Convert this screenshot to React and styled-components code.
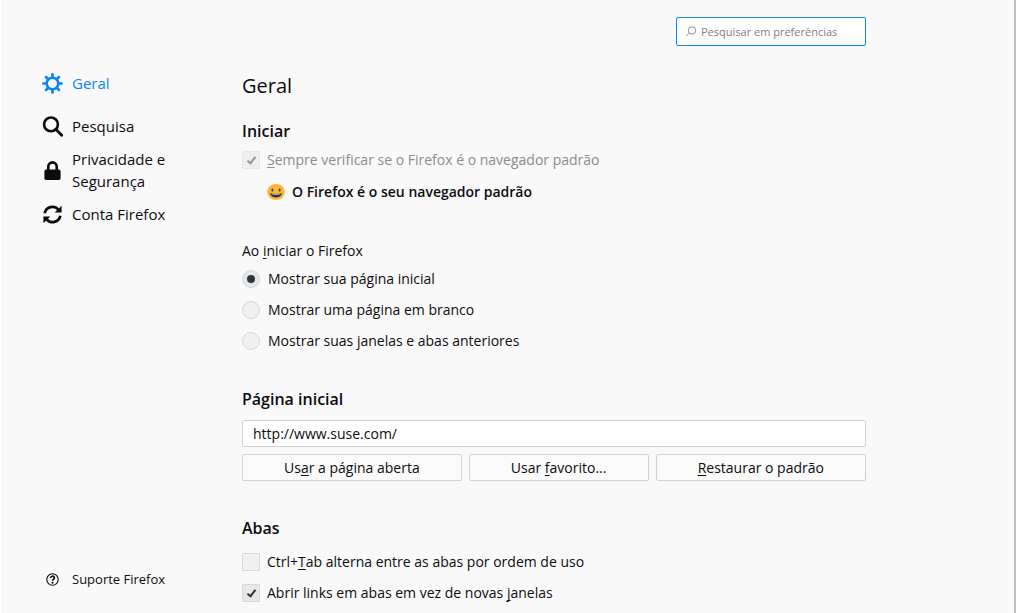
import React, { useState } from "react";
import styled, { createGlobalStyle } from "styled-components";

const GlobalStyle = createGlobalStyle`
  *, *::before, *::after { box-sizing: border-box; }
  body {
    margin: 0;
    background: #f9f9fa;
    color: #0c0c0d;
    font-family: "Open Sans", "Noto Sans", sans-serif;
    font-size: 14px;
    line-height: 22px;
  }
  button, input { font: inherit; color: inherit; }
`;

const Page = styled.div`
  display: flex;
  gap: 42px;
  min-height: 100vh;
  padding-left: 41px;
  border-left: 1px solid #fff;
  border-right: 2px solid #bdbdbe;
`;

const Sidebar = styled.aside`
  display: flex;
  flex: 0 0 158px;
  flex-direction: column;
  justify-content: space-between;
  padding: 67px 0 23px;
`;

const NavList = styled.ul`
  display: flex;
  flex-direction: column;
  gap: 1px;
  margin: 0;
  padding: 0;
  list-style: none;
`;

const NavLink = styled.a`
  display: flex;
  align-items: center;
  gap: 9px;
  padding: ${(p) => (p.$compact ? "0" : "5px 0")};
  margin-bottom: ${(p) => (p.$spaced ? "10px" : "0")};
  color: ${(p) => (p.$active ? "#0a84ff" : "#0c0c0d")};
  font-size: ${(p) => (p.$compact ? "13px" : "15px")};
  text-decoration: none;
`;

const IconBox = styled.span`
  display: flex;
  flex: 0 0 21px;
  justify-content: center;
  svg { display: block; }
`;

const Main = styled.main`
  display: flex;
  flex: 1 1 auto;
  flex-direction: column;
  max-width: 624px;
  padding: 17px 0 9px;
`;

const SearchBox = styled.label`
  display: flex;
  align-items: center;
  align-self: flex-end;
  gap: 4px;
  width: 190px;
  height: 29px;
  padding: 0 8px;
  border: 1px solid #0a84ff;
  border-radius: 2px;
  background: #fff;
  svg { flex: none; }
`;

const SearchInput = styled.input`
  flex: 1;
  min-width: 0;
  padding: 0;
  border: 0;
  outline: 0;
  background: none;
  font-size: 11px;
  line-height: 20px;
  &::placeholder { color: #808080; opacity: 1; }
`;

const Title = styled.h1`
  margin: 26px 0 20px;
  font-size: 20px;
  font-weight: 400;
  line-height: 28px;
`;

const Section = styled.section`
  display: flex;
  flex-direction: column;
  & + & { margin-top: 36px; }
`;

const Heading = styled.h2`
  margin: 0 0 ${(p) => p.$gap || "10px"};
  font-size: 16px;
  font-weight: 600;
  line-height: 22px;
`;

const Options = styled.div`
  display: flex;
  flex-direction: column;
  gap: ${(p) => p.$gap || "9px"};
`;

const RadioGroup = styled.fieldset`
  min-width: 0;
  margin: 37px 0 0;
  padding: 0;
  border: 0;
`;

const Legend = styled.legend`
  margin-bottom: 6px;
  padding: 0;
`;

const Option = styled.label`
  display: flex;
  align-items: center;
  gap: ${(p) => p.$gap || "7px"};
  color: ${(p) => (p.$disabled ? "#8b8c8c" : "inherit")};
`;

const Toggle = styled.input`
  display: grid;
  flex: none;
  place-items: center;
  width: 18px;
  height: 18px;
  margin: 0;
  border: 1px solid #d6d8d9;
  background: #f0f0f1;
  appearance: none;
  &:checked { background: #e6e7e8; }
  &:disabled { border-color: #e6e7e8; background: #efeff0; opacity: 1; }
`;

const CheckInput = styled(Toggle).attrs({ type: "checkbox" })`
  border-radius: 1px;
  &:checked::after {
    content: "";
    width: 5px;
    height: 9px;
    margin-bottom: 2px;
    border: solid #2e3436;
    border-width: 0 2px 2px 0;
    transform: rotate(38deg);
  }
  &:disabled::after { border-color: #929495; }
`;

const RadioInput = styled(Toggle).attrs({ type: "radio" })`
  border-radius: 50%;
  &:checked::after {
    content: "";
    width: 8px;
    height: 8px;
    border-radius: 50%;
    background: #2e3436;
  }
`;

const Status = styled.p`
  display: flex;
  align-items: center;
  gap: 7px;
  margin: 0;
  padding-left: 25px;
  font-weight: 600;
`;

const Key = styled.u`
  text-decoration-thickness: 1px;
  text-underline-offset: 2px;
  text-decoration-skip-ink: none;
`;

const UrlInput = styled.input`
  width: 100%;
  height: 27px;
  padding: 0 10px;
  border: 1px solid #d2d2d4;
  border-radius: 2px;
  outline: 0;
  background: #fff;
`;

const ButtonRow = styled.div`
  display: flex;
  gap: 7px;
  margin-top: 7px;
`;

const Button = styled.button`
  flex: 1 1 auto;
  height: 27px;
  padding: 0 8px;
  border: 1px solid #d2d2d4;
  border-radius: 2px;
  background: #fafafb;
`;

const GearIcon = () => (
  <svg width="21" height="21" viewBox="0 0 21 21" fill="none" stroke="currentColor" aria-hidden="true">
    <circle cx="10.5" cy="10.5" r="5.8" strokeWidth="2.6" />
    {[0, 45, 90, 135, 180, 225, 270, 315].map((a) => (
      <path key={a} d="M10.5 4.5V1.4" strokeWidth="2.7" strokeLinecap="round" transform={`rotate(${a} 10.5 10.5)`} />
    ))}
  </svg>
);

const MagnifierIcon = () => (
  <svg width="21" height="21" viewBox="0 0 21 21" fill="none" stroke="currentColor" aria-hidden="true">
    <circle cx="9" cy="8.4" r="6.9" strokeWidth="2.6" />
    <path d="M13.8 13.3L19.7 19.3" strokeWidth="2.8" strokeLinecap="round" />
  </svg>
);

const LockIcon = () => (
  <svg width="17" height="19" viewBox="0 0 17 19" aria-hidden="true">
    <path d="M4.3 9.5V5.6a4.2 4.2 0 0 1 8.4 0V9.5" fill="none" stroke="currentColor" strokeWidth="2.6" />
    <rect x="0.4" y="8.6" width="16.2" height="10.4" rx="1.8" fill="currentColor" />
  </svg>
);

const SyncIcon = () => (
  <svg width="19" height="19" viewBox="0 0 19 19" fill="none" stroke="currentColor" aria-hidden="true">
    <path d="M1.7 8.2A7.8 7.8 0 0 1 15.4 4.7M17.3 10.8A7.8 7.8 0 0 1 3.6 14.3" strokeWidth="2.7" />
    <path d="M18.6 .7V7.6H11.7ZM.4 18.3V11.4H7.3Z" fill="currentColor" stroke="none" />
  </svg>
);

const HelpIcon = () => (
  <svg width="13" height="13" viewBox="0 0 13 13" fill="none" stroke="currentColor" aria-hidden="true">
    <circle cx="6.5" cy="6.5" r="5.7" strokeWidth="1.1" />
    <path d="M4.6 5a1.9 1.7 0 1 1 2.8 1.4q-.9.5-.9 1.3" strokeWidth="1.7" />
    <circle cx="6.5" cy="9.7" r="1" fill="currentColor" stroke="none" />
  </svg>
);

const SearchIcon = () => (
  <svg width="12" height="12" viewBox="0 0 12 12" fill="none" stroke="#8c8c8c" aria-hidden="true">
    <circle cx="7" cy="4.4" r="3.7" />
    <path d="M4.3 7.1L1.4 9.9" strokeLinecap="round" />
  </svg>
);

const SmileIcon = () => (
  <svg width="18" height="18" viewBox="0 0 18 18" aria-hidden="true">
    <ellipse cx="9" cy="9" rx="8.8" ry="8.1" fill="#ffb636" />
    <ellipse cx="5.4" cy="7" rx="1" ry="1.6" fill="#2b3b47" />
    <ellipse cx="12.6" cy="7" rx="1" ry="1.6" fill="#2b3b47" />
    <path d="M2.8 10.2Q9 11.6 15.2 10.2Q13.8 14.4 9 14.4T2.8 10.2Z" fill="#2b3b47" />
    <path d="M4.6 10.7Q9 11.6 13.4 10.7L13 11.3Q9 12 5 11.3Z" fill="#fff" />
  </svg>
);

export default function App() {
  const [startup, setStartup] = useState("home");
  const [cycleTabs, setCycleTabs] = useState(false);
  const [openInTabs, setOpenInTabs] = useState(true);

  const startupOptions = [
    ["home", "Mostrar sua página inicial"],
    ["blank", "Mostrar uma página em branco"],
    ["previous", "Mostrar suas janelas e abas anteriores"],
  ];

  return (
    <>
      <GlobalStyle />
      <Page>
        <Sidebar>
          <nav>
            <NavList>
              <li><NavLink href="#geral" $active $spaced aria-current="page"><IconBox><GearIcon /></IconBox>Geral</NavLink></li>
              <li><NavLink href="#pesquisa"><IconBox><MagnifierIcon /></IconBox>Pesquisa</NavLink></li>
              <li><NavLink href="#privacidade"><IconBox><LockIcon /></IconBox>Privacidade e Segurança</NavLink></li>
              <li><NavLink href="#conta"><IconBox><SyncIcon /></IconBox>Conta Firefox</NavLink></li>
            </NavList>
          </nav>
          <NavLink href="#suporte" $compact><IconBox><HelpIcon /></IconBox>Suporte Firefox</NavLink>
        </Sidebar>
        <Main>
          <SearchBox>
            <SearchIcon />
            <SearchInput type="text" placeholder="Pesquisar em preferências" aria-label="Pesquisar em preferências" />
          </SearchBox>
          <Title>Geral</Title>
          <Section>
            <Heading $gap="7px">Iniciar</Heading>
            <Options $gap="10px">
              <Option $disabled>
                <CheckInput defaultChecked disabled />
                <span><Key>S</Key>empre verificar se o Firefox é o navegador padrão</span>
              </Option>
              <Status><SmileIcon />O Firefox é o seu navegador padrão</Status>
            </Options>
            <RadioGroup>
              <Legend>Ao <Key>i</Key>niciar o Firefox</Legend>
              <Options>
                {startupOptions.map(([value, text]) => (
                  <Option key={value} $gap="8px">
                    <RadioInput name="startup" value={value} checked={startup === value} onChange={() => setStartup(value)} />
                    <span>{text}</span>
                  </Option>
                ))}
              </Options>
            </RadioGroup>
          </Section>
          <Section>
            <Heading id="home-heading">Página inicial</Heading>
            <UrlInput type="text" defaultValue="http://www.suse.com/" aria-labelledby="home-heading" />
            <ButtonRow>
              <Button type="button">Us<Key>a</Key>r a página aberta</Button>
              <Button type="button">Usar <Key>f</Key>avorito...</Button>
              <Button type="button"><Key>R</Key>estaurar o padrão</Button>
            </ButtonRow>
          </Section>
          <Section>
            <Heading $gap="12px">Abas</Heading>
            <Options>
              <Option>
                <CheckInput checked={cycleTabs} onChange={(e) => setCycleTabs(e.target.checked)} />
                <span>Ctrl+<Key>T</Key>ab alterna entre as abas por ordem de uso</span>
              </Option>
              <Option>
                <CheckInput checked={openInTabs} onChange={(e) => setOpenInTabs(e.target.checked)} />
                <span>Abrir links em abas em vez de novas <Key>j</Key>anelas</span>
              </Option>
            </Options>
          </Section>
        </Main>
      </Page>
    </>
  );
}
